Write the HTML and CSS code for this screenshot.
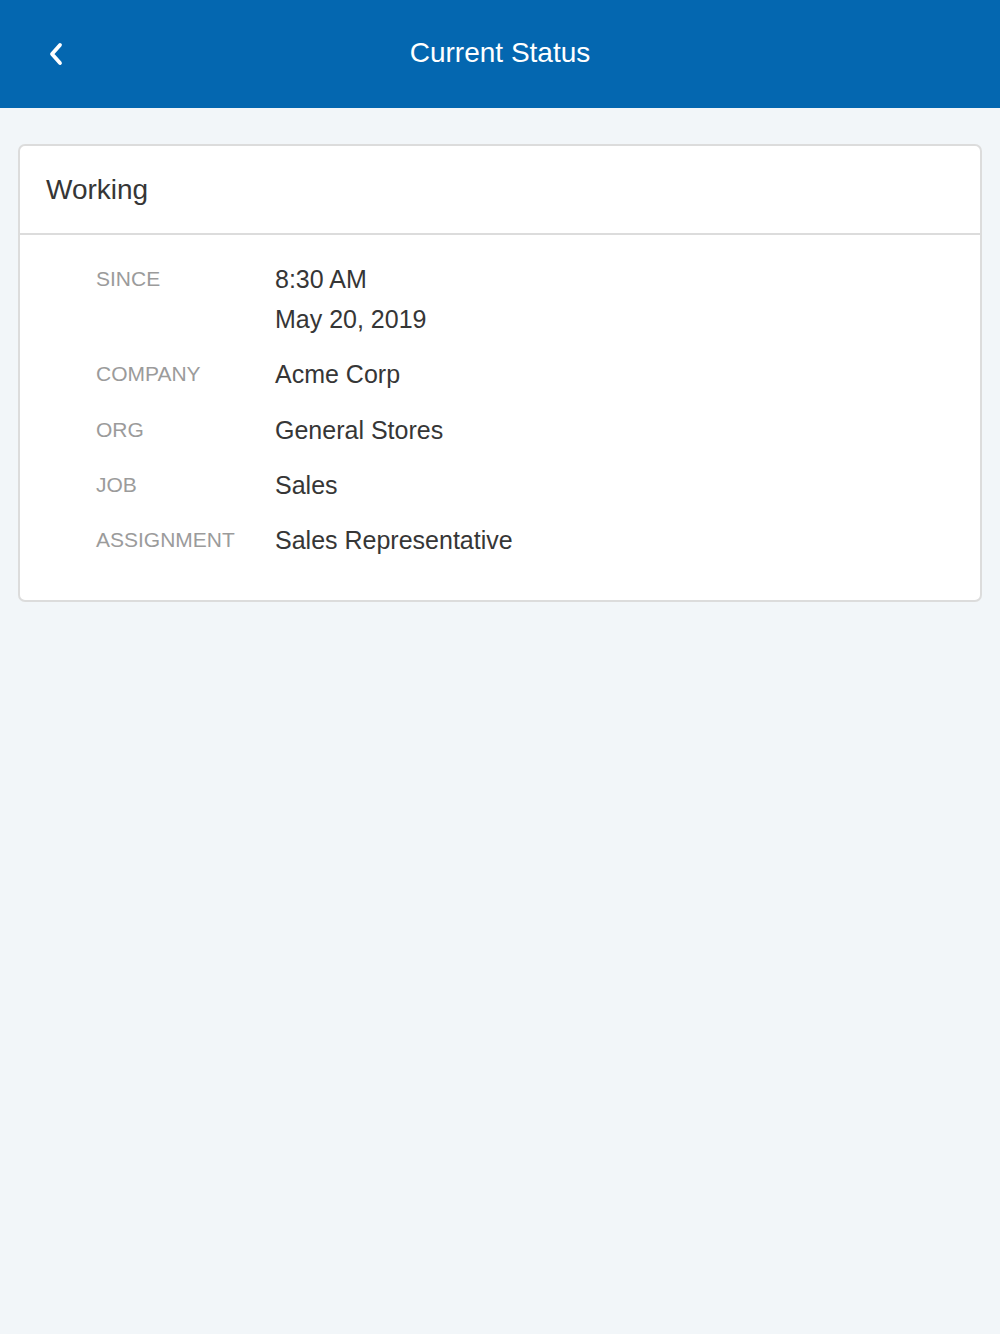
FILE: index.html
```html
<!DOCTYPE html>
<html lang="en">
<head>
    <meta charset="UTF-8">
    <meta name="viewport" content="width=device-width, initial-scale=1.0">
    <title>Current Status</title>
    <link rel="stylesheet" href="styles.css">
</head>
<body>
    <header class="nav-bar">
        <button class="back-button" aria-label="Back">
            <svg width="20" height="24" viewBox="0 0 20 24">
                <path d="M14 3 L6 12 L14 21" fill="none" stroke="#fff" stroke-width="3.8" stroke-linecap="round" stroke-linejoin="round"/>
            </svg>
        </button>
        <h1>Current Status</h1>
    </header>

    <main class="content">
        <div class="status-card">
            <div class="status-title">Working</div>
            <div class="status-details">
                <div class="detail-row">
                    <div class="detail-label">SINCE</div>
                    <div class="detail-value">8:30 AM<br>May 20, 2019</div>
                </div>
                <div class="detail-row">
                    <div class="detail-label">COMPANY</div>
                    <div class="detail-value">Acme Corp</div>
                </div>
                <div class="detail-row">
                    <div class="detail-label">ORG</div>
                    <div class="detail-value">General Stores</div>
                </div>
                <div class="detail-row">
                    <div class="detail-label">JOB</div>
                    <div class="detail-value">Sales</div>
                </div>
                <div class="detail-row">
                    <div class="detail-label">ASSIGNMENT</div>
                    <div class="detail-value">Sales Representative</div>
                </div>
            </div>
        </div>
    </main>
</body>
</html>
```

FILE: styles.css
```css
body {
    font-family: 'Liberation Sans', Arial, sans-serif;
    margin: 0;
    padding: 0;
    background-color: #f2f6f9;
    color: #363636;
    min-height: 100vh;
}
.nav-bar {
    height: 108px;
    background-color: #0467b0;
    display: flex;
    align-items: center;
    justify-content: center;
    position: relative;
}
.nav-bar h1 {
    margin: 0;
    color: #fff;
    font-size: 28px;
    font-weight: 400;
    margin-top: -3px;
}
.back-button {
    position: absolute;
    left: 46px;
    top: 42px;
    background: none;
    border: none;
    padding: 0;
    cursor: pointer;
}
.back-button svg {
    display: block;
}
.content {
    padding: 36px 18px;
}
.status-card {
    background-color: #fff;
    border: 2px solid #dcdcdc;
    border-radius: 7px;
}
.status-title {
    height: 87px;
    line-height: 87px;
    padding-left: 26px;
    font-size: 28px;
    border-bottom: 2px solid #dcdcdc;
}
.status-details {
    padding: 24px 0 40px 76px;
    display: flex;
    flex-direction: column;
    gap: 15.3px;
}
.detail-row {
    display: flex;
}
.detail-label {
    width: 179px;
    flex-shrink: 0;
    font-size: 21px;
    line-height: 40px;
    color: #9b9b9b;
}
.detail-value {
    font-size: 25px;
    line-height: 40px;
    color: #363636;
}
```
